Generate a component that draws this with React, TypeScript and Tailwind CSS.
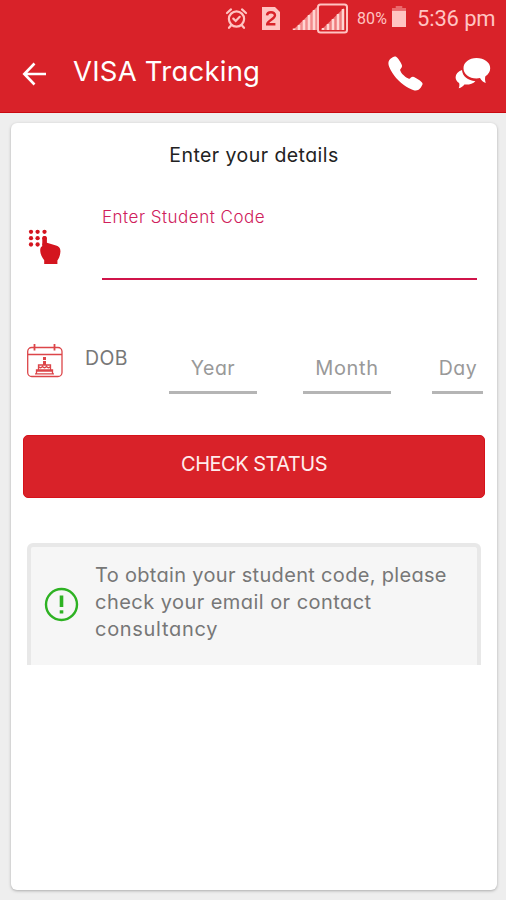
import React from "react";
import { IoCall } from "react-icons/io5";

function StatusBar() {
  return (
    <div className="flex h-9 items-center text-[#ffc4c2]">
      <svg className="ml-[225px] mt-px h-[23px] w-[23px] shrink-0" viewBox="0 0 23 23" fill="none" stroke="currentColor" strokeWidth="2.200" strokeLinecap="round">
        <circle cx="11.500" cy="12" r="7.600" />
        <path d="M2 6l4-3.6M21 6l-4-3.6M6 18.5l-2 2.3M17 18.5l2 2.3M8.3 11.6l2.4 2.4 4-4.2" />
      </svg>
      <svg className="ml-[14px] h-[23px] w-[18px] shrink-0" viewBox="0 0 18 23">
        <path d="M0 0h13l5 5v18H0z" fill="currentColor" />
        <path d="M5 8.3c.2-2 1.7-3 4-3s4 1.100 4 3c0 3.600-7.800 5.800-7.800 9h8.200" fill="none" stroke="#d92229" strokeWidth="2.400" />
      </svg>
      <svg className="ml-[12px] h-[33px] w-[58px] shrink-0" viewBox="0 0 58 33">
        <path d="M1 28L25 5v23z" fill="currentColor" opacity=".65" />
        <path d="M2 28v-1.500M7 28v-5M12 28V18M17 28V13M22 28V8" stroke="#ffd5d2" strokeWidth="2.500" />
        <rect x="26" y="2.500" width="29" height="28" rx="2.500" fill="none" stroke="currentColor" strokeWidth="2" />
        <path d="M29 28L52 6v22z" fill="currentColor" opacity=".55" />
        <path d="M31 28v-2M36 28v-6M41 28V17M46 28V12M51 28V7" stroke="#ffd5d2" strokeWidth="2.500" />
      </svg>
      <span className="ml-[7px] mt-[2px] w-[35px] whitespace-nowrap font-['Roboto',sans-serif] text-[16px] tracking-[0.100px]">80%</span>
      <svg className="-mt-[3px] h-[21px] w-[14px] shrink-0" viewBox="0 0 15 22" preserveAspectRatio="none">
        <path d="M0 5V2h4V0h7v2h4v3z" fill="currentColor" opacity=".45" />
        <path d="M0 5h15v17H0z" fill="currentColor" />
      </svg>
      <span className="ml-[11px] mt-px whitespace-nowrap font-['Roboto',sans-serif] text-[22px] tracking-[-0.150px]">5:36 pm</span>
    </div>
  );
}

function AppBar() {
  return (
    <div className="flex h-[76px] text-white">
      <svg className="ml-[22px] mt-[26px] h-6 w-6 shrink-0" viewBox="0 0 24 24" fill="none" stroke="currentColor" strokeWidth="2.600">
        <path d="M24 12H3M12.500 1.500L2.300 12l10.200 10.500" />
      </svg>
      <h1 className="ml-[27px] mt-[17px] w-[315px] whitespace-nowrap text-[27.500px] leading-9 tracking-[0.230px]">VISA Tracking</h1>
      <IoCall className="-ml-[2px] mt-[18px] h-[39px] w-[39px] shrink-0" />
      <svg className="ml-[30px] mt-[21px] h-[34px] w-[36px] shrink-0" viewBox="0 0 36 34" fill="currentColor">
        <path d="M7 13C3 14.500.600 17 .600 20.300c0 2.400 1.300 4.400 3.500 5.800.5 1.800.4 3.600-.4 5.200 2.500-.6 4.500-2 5.700-3.800 4.400.5 8.600-.8 11-3.300C13 23.500 7.500 19.500 7 13z" />
        <path d="M21.500 1C14 1 8.500 5.300 8.500 11.200S14 21.500 21.500 21.500c1.300 0 2.400-.1 3.500-.4 1.400 2.600 3.400 4.100 5.800 4.900-.9-2.400-1-4.600-.4-6.700 3-1.900 4.800-4.700 4.800-8.100C35.200 5.300 29.200 1 21.500 1z" />
      </svg>
    </div>
  );
}

function KeypadIcon() {
  return (
    <svg className="ml-[17px] mt-[39px] h-[36px] w-[34px] shrink-0" viewBox="0 0 34 36" fill="#d4151f">
      {[3, 9.6, 16.5].map((x) =>
        [2.8, 9.2, 15.5].map((y) => <circle key={x + "-" + y} cx={x} cy={y} r="2.150" />)
      )}
      <path d="M14.300 9.500c0-3.200 4.600-3.200 4.600 0v4.200l8.300 2.500c3.700 1.100 5.500 2.600 5.200 6.600-.3 3.600-1.200 6.300-3 8.700V35H16.200v-3.800c-2.200-3-4-6.200-4-10.200 0-2 .8-3.200 2.100-4z" />
    </svg>
  );
}

function BirthdayIcon() {
  return (
    <svg className="ml-4 mt-[5px] h-[34px] w-[36px] shrink-0" viewBox="0 0 36 34" fill="none" stroke="#dc4549" strokeWidth="1.300">
      <rect x=".700" y="3.500" width="34.300" height="29" rx="4" />
      <path d="M1 10.500h34" />
      <path d="M7.500 0v6.500M27.500 0v6.500" strokeWidth="1.800" />
      <path d="M17.500 13v8" strokeWidth="3" strokeDasharray="3 1 4" />
      <path d="M11.500 26v-5h12v5M9.500 29.500V26h16v3.500M8 29.800h19M11.500 22.500q2 2.500 4 0 2 2.500 4 0 2 2.500 4 0M10 27h15" />
    </svg>
  );
}

function Info() {
  return (
    <section className="ml-4 mt-[45px] h-[122px] w-[454px] overflow-hidden">
      <div className="flex h-[132px] rounded-[6px] border-x-[4px] border-t-[4px] border-[#e8e8e8] bg-[#f6f6f6]">
        <svg className="ml-[13px] mt-[40px] h-9 w-9 shrink-0" viewBox="0 0 36 36" fill="none" stroke="#2eb223">
          <circle cx="17.500" cy="17.500" r="15.500" strokeWidth="2.400" />
          <path d="M17.500 8.500v11.500" strokeWidth="3.600" />
          <path d="M17.500 23.300v3.200" strokeWidth="3.600" />
        </svg>
        <p className="ml-[15px] mt-[15px] whitespace-nowrap text-[20px] leading-[27px] tracking-[0.320px] text-[#777]">
          <span className="block">To obtain your student code, please</span>
          <span className="block tracking-[0.450px]">check your email or contact</span>
          <span className="block tracking-[0.700px]">consultancy</span>
        </p>
      </div>
    </section>
  );
}

export default function App() {
  return (
    <div className="h-[900px] w-[506px] overflow-hidden bg-[#eeeeee] font-['Inter','Noto_Sans',sans-serif] [font-feature-settings:'cv11']">
      <header className="h-[113px] border-b border-[#c9090f] bg-[#d92229]">
        <StatusBar />
        <AppBar />
      </header>
      <main className="ml-[11px] mt-[10px] h-[767px] w-[486px] overflow-hidden rounded-[6px] bg-white shadow-[0_1px_3px_#aaa]">
        <h2 className="mt-[18px] text-center text-[19.500px] leading-[28px] tracking-[0.440px] text-[#222]">Enter your details</h2>
        <div className="mt-[21px] flex h-[112px]">
          <KeypadIcon />
          <label className="ml-[40px] mt-[15px] h-[75px] w-[375px] border-b-2 border-[#d0144a] text-[17px] font-light leading-6 tracking-[0.500px] text-[#cf205b]">Enter Student Code</label>
        </div>
        <div className="mt-[37px] flex h-[70px]">
          <BirthdayIcon />
          <span className="ml-[22px] mt-[7px] w-[84px] text-[19.500px] leading-6 tracking-[0.400px] text-[#777]">DOB</span>
          <span className="mt-[17px] h-[38px] w-[88px] border-b-[3px] border-[#b5b5b5] text-center text-[19.500px] leading-6 tracking-[0.500px] text-[#999]">Year</span>
          <span className="ml-[46px] mt-[17px] h-[38px] w-[88px] border-b-[3px] border-[#b5b5b5] text-center text-[20px] leading-6 tracking-[0.700px] text-[#999]">Month</span>
          <span className="ml-[41px] mt-[17px] h-[38px] w-[51px] border-b-[3px] border-[#b5b5b5] pl-px text-center text-[19.500px] leading-6 tracking-[0.500px] text-[#999]">Day</span>
        </div>
        <button className="ml-3 mt-[26px] block h-[63px] w-[462px] rounded-[5px] border border-[#d6121a] bg-[#d92229] pb-[5px] text-center text-[20px] tracking-[-0.500px] text-[#ffecec]">CHECK STATUS</button>
        <Info />
      </main>
    </div>
  );
}
